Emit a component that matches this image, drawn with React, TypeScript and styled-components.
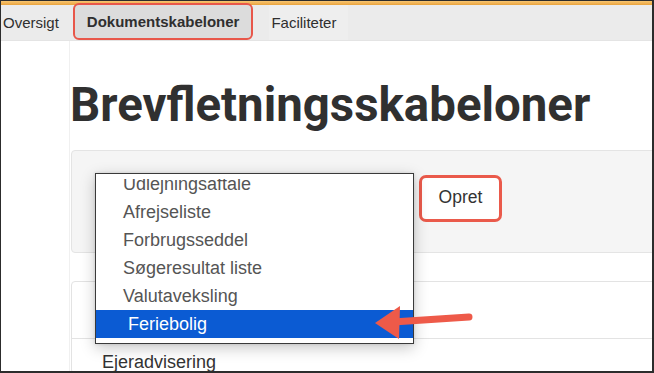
import React from "react";
import styled, { createGlobalStyle } from "styled-components";

const GlobalStyle = createGlobalStyle`
  html, body { margin: 0; padding: 0; background: #ffffff; }
  body { font-family: "Liberation Sans", Arial, sans-serif; }
  * { box-sizing: border-box; }
`;

const Frame = styled.div`
  position: relative;
  width: 654px;
  height: 373px;
  overflow: hidden;
  background: #ffffff;
  border-left: 1px solid #2c2c2c;
  border-right: 2px solid #2c2c2c;
  border-bottom: 2px solid #2c2c2c;
  border-top: 1px solid #2c2c2c;
  display: flex;
  flex-direction: column;
`;

const Stripe = styled.div`
  height: 4px;
  flex: none;
  background: linear-gradient(#f8c672, #e9a23c);
`;

const NavBar = styled.nav`
  height: 36px;
  flex: none;
  display: flex;
  align-items: stretch;
  background: #ebebeb;
  border-bottom: 1px solid #e4e4e4;
`;

const NavTab = styled.div<{ $active?: boolean }>`
  display: flex;
  align-items: center;
  font-size: 15px;
  color: #2f2f2f;
  font-weight: ${(p) => (p.$active ? 700 : 400)};
  padding: ${(p) => (p.$active ? "0 12px" : "0 14px 0 2px")};
  background: ${(p) => (p.$active ? "#dcdcdc" : "transparent")};
  border: ${(p) => (p.$active ? "2.5px solid #e8574a" : "none")};
  border-radius: ${(p) => (p.$active ? "6px" : "0")};
  margin-top: ${(p) => (p.$active ? "-2px" : "0")};
  margin-right: ${(p) => (p.$active ? "16px" : "0")};
  white-space: nowrap;
`;

const NavTabPlain = styled(NavTab)`
  padding: 0 12px 0 2px;
  background: #eeeeee;
`;

const Body = styled.div`
  flex: 1;
  display: flex;
  min-height: 0;
`;

const Sidebar = styled.aside`
  width: 69px;
  flex: none;
  border-right: 1px solid #f0f0f0;
`;

const Main = styled.main`
  flex: 1;
  min-width: 0;
  padding-left: 1px;
  display: flex;
  flex-direction: column;
`;

const Heading = styled.h1`
  flex: none;
  margin: 37px 0 0 -1px;
  font-family: Roboto, "Liberation Sans", sans-serif;
  font-weight: 700;
  font-size: 47.4px;
  line-height: 54px;
  color: #303030;
  white-space: nowrap;
`;

const Well = styled.div`
  flex: none;
  margin-top: 18px;
  width: calc(100% + 20px);
  height: 103px;
  background: #f5f5f5;
  border: 1px solid #e4e4e4;
  border-radius: 4px;
  display: flex;
  align-items: flex-start;
  padding: 22px 0 0 23px;
`;

const SelectWrap = styled.div`
  position: relative;
  width: 319px;
  height: 40px;
  flex: none;
`;

const PopupList = styled.ul`
  position: absolute;
  left: 0;
  top: 0;
  width: 319px;
  height: 171px;
  margin: 0;
  padding: 0;
  list-style: none;
  background: #ffffff;
  border: 1px solid #3a3a3a;
  box-shadow: 0 4px 14px rgba(0, 0, 0, 0.22), 0 0 3px rgba(0, 0, 0, 0.12);
  overflow: hidden;
  z-index: 2;
`;

const ScrollCap = styled.div`
  position: absolute;
  left: 0;
  right: 0;
  top: 0;
  height: 5px;
  background: #ffffff;
  z-index: 1;
`;

const Scroller = styled.div`
  margin-top: -4px;
`;

const Option = styled.li<{ $selected?: boolean }>`
  height: 28px;
  line-height: 28px;
  font-size: 18px;
  padding-left: ${(p) => (p.$selected ? "32px" : "27px")};
  color: ${(p) => (p.$selected ? "#ffffff" : "#555555")};
  background: ${(p) => (p.$selected ? "#0b5bd3" : "transparent")};
  white-space: nowrap;
`;

const CreateButton = styled.button`
  flex: none;
  margin: 2px 0 0 5px;
  width: 83px;
  height: 47px;
  background: #ffffff;
  border: 3px solid #ea5a4b;
  border-radius: 7px;
  font-family: "Liberation Sans", Arial, sans-serif;
  font-size: 17.5px;
  color: #333333;
  padding: 0 0 2px 0;
`;

const Card = styled.section`
  margin-top: 28px;
  width: calc(100% + 20px);
  background: #ffffff;
  border: 1px solid #e3e3e3;
  border-radius: 4px;
  flex: 1 0 auto;
`;

const CardHeader = styled.div`
  height: 57px;
  border-bottom: 1px solid #e3e3e3;
`;

const CardRow = styled.div`
  padding: 12px 0 0 30px;
  font-size: 18px;
  line-height: 22px;
  color: #333333;
`;

const ArrowSvg = styled.svg`
  position: absolute;
  left: 360px;
  top: 296px;
  z-index: 3;
`;

const items = [
  "Udlejningsaftale",
  "Afrejseliste",
  "Forbrugsseddel",
  "Søgeresultat liste",
  "Valutaveksling",
];

export default function App() {
  return (
    <>
      <GlobalStyle />
      <Frame>
        <Stripe />
        <NavBar>
          <NavTab>Oversigt</NavTab>
          <NavTab $active>Dokumentskabeloner</NavTab>
          <NavTabPlain>Faciliteter</NavTabPlain>
        </NavBar>
        <Body>
          <Sidebar />
          <Main>
            <Heading>Brevfletningsskabeloner</Heading>
            <Well>
              <SelectWrap>
                <PopupList>
                  <ScrollCap />
                  <Scroller>
                    {items.map((t) => (
                      <Option key={t}>{t}</Option>
                    ))}
                    <Option $selected>Feriebolig</Option>
                  </Scroller>
                </PopupList>
              </SelectWrap>
              <CreateButton>Opret</CreateButton>
            </Well>
            <Card>
              <CardHeader />
              <CardRow>Ejeradvisering</CardRow>
            </Card>
          </Main>
        </Body>
        <ArrowSvg width="120" height="50" viewBox="360 296 120 50">
          <line x1="468" y1="316" x2="392" y2="321" stroke="#ee5a49" strokeWidth="7" strokeLinecap="round" />
          <polygon points="374,322 399,305 398,338" fill="#ee5a49" />
        </ArrowSvg>
      </Frame>
    </>
  );
}
